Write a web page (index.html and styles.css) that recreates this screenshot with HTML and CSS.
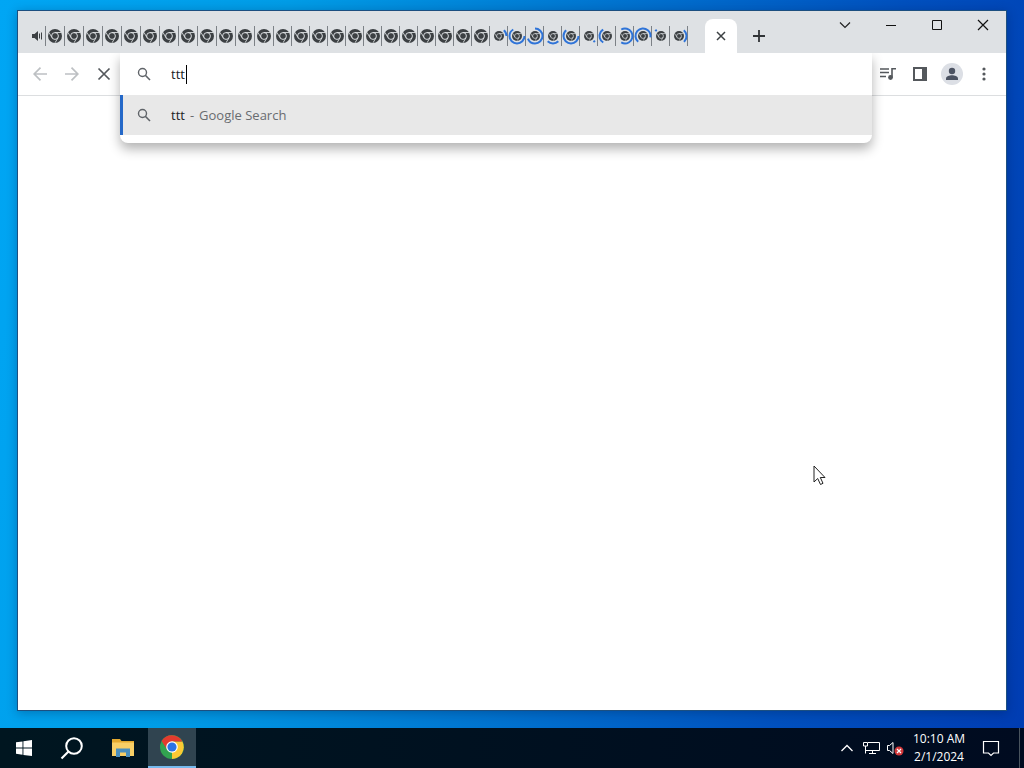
FILE: index.html
```html
<!DOCTYPE html>
<html lang="en">
<head>
<meta charset="utf-8">
<title>Desktop</title>
<link rel="stylesheet" href="styles.css">
</head>
<body>
<svg class="defs" aria-hidden="true">
  <symbol id="chrome" viewBox="0 0 16 16">
    <circle cx="8" cy="8" r="8" fill="#3c4043"/>
    <circle cx="8" cy="8" r="3.9" fill="none" stroke="#dee1e4" stroke-width="1.1"/>
    <path d="M8 4H15M11.500 9.900 8 15.800M4.600 9.900 1.100 3.900" stroke="#dee1e4" stroke-width="1"/>
  </symbol>
  <symbol id="search" viewBox="0 0 16 16">
    <circle cx="6.5" cy="6.5" r="4" fill="none" stroke="currentColor" stroke-width="1.4"/>
    <path d="M9.3 9.3 14 14" stroke="currentColor" stroke-width="1.6"/>
  </symbol>
</svg>
<main class="desktop">
  <section class="window">
    <header class="titlebar">
      <nav class="tabs" id="tabs" aria-label="Tabs">
        <button class="tab tab-audio" aria-label="Playing audio"><svg width="11" height="12" viewBox="0 0 11 12"><path d="M0 4h2.500L6 1v10L2.500 8H0z" fill="#3c4043"/><path d="M7.500 3.500v5M9.500 2.500v7" stroke="#3c4043"/></svg></button>
      </nav>
      <button class="active-tab" aria-label="Close tab"><svg width="10" height="10" viewBox="0 0 10 10"><path d="M1 1 9 9M9 1 1 9" stroke="#3c4043" stroke-width="1.500"/></svg></button>
      <button class="new-tab" aria-label="New tab"><svg width="12" height="12" viewBox="0 0 12 12"><path d="M6 0v12M0 6h12" stroke="#303336" stroke-width="1.800"/></svg></button>
      <div class="controls">
        <button aria-label="Search tabs"><svg width="12" height="12" viewBox="0 0 12 12"><path d="M1 3.500 6 8.500 11 3.500" fill="none" stroke="#222" stroke-width="1.200"/></svg></button>
        <button aria-label="Minimize"><svg width="10" height="12" viewBox="0 0 10 12"><path d="M0 6.500h10" stroke="#111"/></svg></button>
        <button aria-label="Maximize"><svg width="10" height="12" viewBox="0 0 10 12"><path d="M.5 1.500h9v9h-9z" fill="none" stroke="#111"/></svg></button>
        <button aria-label="Close"><svg width="10" height="12" viewBox="0 0 10 12"><path d="M0 1 10 11M10 1 0 11" stroke="#111" stroke-width="1.200"/></svg></button>
      </div>
    </header>
    <div class="toolbar">
      <button aria-label="Back"><svg width="14" height="14" viewBox="0 0 14 14"><path d="M14 7H1M7.500 .7 1.200 7l6.300 6.300" fill="none" stroke="#bdc0c3" stroke-width="1.700"/></svg></button>
      <button aria-label="Forward"><svg width="14" height="14" viewBox="0 0 14 14"><path d="M0 7h13M6.500 .7 12.800 7l-6.300 6.300" fill="none" stroke="#bdc0c3" stroke-width="1.700"/></svg></button>
      <button aria-label="Stop loading"><svg width="12" height="12" viewBox="0 0 12 12"><path d="M.5 .5l11 11M11.500 .5l-11 11" stroke="#54585c" stroke-width="1.700"/></svg></button>
      <div class="omnibox">
        <div class="popup">
          <label class="row">
            <svg class="glass" width="16" height="16"><use href="#search"/></svg>
            <span class="entry"><input class="query" type="text" value="ttt" size="1" aria-label="Address and search bar"><span class="caret"></span></span>
          </label>
          <a class="row suggestion" href="#">
            <svg class="glass" width="16" height="16"><use href="#search"/></svg>
            <span class="match">ttt</span><span class="hint"><span>-</span><span>Google Search</span></span>
          </a>
        </div>
      </div>
      <button aria-label="Media controls"><svg width="16" height="14" viewBox="0 0 16 14"><path d="M0 2h9M0 5.500h9M0 9.500h6M12 10.500V1.800h4" fill="none" stroke="#54585c" stroke-width="1.600"/><circle cx="10.500" cy="10.500" r="2.400" fill="#54585c"/></svg></button>
      <button aria-label="Side panel"><svg width="14" height="14" viewBox="0 0 14 14"><path d="M0 0h14v14H0zM2 2v10h7V2z" fill="#54585c" fill-rule="evenodd"/></svg></button>
      <button aria-label="Profile"><svg width="22" height="22" viewBox="0 0 22 22"><circle cx="11" cy="11" r="11" fill="#dcdfe5"/><circle cx="11" cy="8" r="3.200" fill="#4c5362"/><path d="M5 17v-1.500c0-2 3.500-3.200 6-3.200s6 1.200 6 3.200V17z" fill="#4c5362"/></svg></button>
      <button aria-label="Menu"><svg width="4" height="14" viewBox="0 0 4 14"><g fill="#54585c"><circle cx="2" cy="2" r="1.600"/><circle cx="2" cy="7" r="1.600"/><circle cx="2" cy="12" r="1.600"/></g></svg></button>
    </div>
    <div class="page"></div>
  </section>
  <svg class="pointer" width="13" height="21" viewBox="0 0 13 21"><path d="M1 1v16l3.700-3.500 2.800 6 2.500-1.200-2.700-5.800H12z" fill="#fff" stroke="#222"/></svg>
</main>
<footer class="taskbar">
  <button class="app" aria-label="Start"><svg width="16" height="16" viewBox="0 0 16 16"><path d="M0 2.300 6.500 1.400V7.600H0zM7.400 1.200 16 0V7.600H7.400zM0 8.500H6.500V14.700L0 13.800zM7.400 8.500H16V16L7.400 14.900z" fill="#fff"/></svg></button>
  <button class="app" aria-label="Search"><svg width="24" height="24" viewBox="0 0 24 24"><circle cx="14" cy="10" r="7.800" fill="none" stroke="#fff" stroke-width="2"/><path d="M8.500 15.500 1.500 22.500" stroke="#fff" stroke-width="2.200"/></svg></button>
  <button class="app files" aria-label="File Explorer"><svg width="22" height="20" viewBox="0 0 22 20"><path d="M0 1h8l1.500 2H22v15H0z" fill="#e3a92f"/><path d="M0 4.500h22V18H0z" fill="#f8cf66"/><path d="M4 19v-8.500h14V19h-4v-4.500H8V19z" fill="#4a8fbe"/></svg></button>
  <button class="app running" aria-label="Google Chrome"><svg width="24" height="24" viewBox="0 0 24 24"><circle cx="12" cy="12" r="12" fill="#32a350"/><path d="M12 12 12 24A12 12 0 0 0 22.400 6.500H12z" fill="#fcc934"/><path d="M1.600 6A12 12 0 0 1 22.400 6.500H12L7.200 14.700z" fill="#e33b2e"/><circle cx="12" cy="12" r="5.800" fill="#fff"/><circle cx="12" cy="12" r="4.600" fill="#2b73e4"/></svg></button>
  <div class="tray">
    <button aria-label="Show hidden icons"><svg width="12" height="8" viewBox="0 0 12 8"><path d="M.5 7 6 1.500 11.500 7" fill="none" stroke="#fff" stroke-width="1.300"/></svg></button>
    <button aria-label="Network"><svg width="17" height="14" viewBox="0 0 17 14"><path d="M5 1.500h11.500v8H4M2.500 5v7.500M2.500 9.500H4M6 12.500h7M9.500 9.500v3M.5 1.500h4v3.500h-4z" fill="none" stroke="#fff"/></svg></button>
    <button aria-label="Volume muted"><svg width="17" height="15" viewBox="0 0 17 15"><path d="M.5 4.500h2l3.500-3v11l-3.500-3h-2z" fill="none" stroke="#fff"/><circle cx="12" cy="10" r="4.500" fill="#d3383a"/><path d="M10 8l4 4M14 8l-4 4" stroke="#fff" stroke-width="1.200"/></svg></button>
    <button class="clock"><span>10:10 AM</span><span>2/1/2024</span></button>
    <button class="notify" aria-label="Notifications"><svg width="16" height="17" viewBox="0 0 16 17"><path d="M.5 1.500h15v11.500H10.500L8 15.500 5.500 13H.5z" fill="none" stroke="#fff" stroke-width="1.200"/></svg></button>
  </div>
  <div class="peek"></div>
</footer>
<script src="tabs.js"></script>
</body>
</html>
```
FILE: styles.css
```css
* { box-sizing: border-box; }
body {
  margin: 0;
  min-height: 100vh;
  display: flex;
  flex-direction: column;
  font: 13px/20px "Open Sans", "Noto Sans", sans-serif;
  background: linear-gradient(100deg, #00a6f4 0%, #009ce6 25%, #0078d2 50%, #0050be 78%, #003cb2 100%);
}
button { border: 0; padding: 0; background: none; font: inherit; color: inherit; display: grid; place-items: center; }
svg { display: block; overflow: visible; }
.defs { position: absolute; width: 0; height: 0; }

.desktop { flex: 1; display: flex; padding: 10px 17px 17px; }
.window { flex: 1; display: flex; flex-direction: column; border: 1px solid #1c4f80; background: #fff; box-shadow: 0 2px 10px rgba(0, 20, 60, 0.3); }
.titlebar { display: flex; height: 42px; padding-left: 9px; background: #dee1e4; }
.tabs { display: flex; align-items: center; margin-right: 17px; }
.tab { width: 18px; height: 20px; padding-left: 1px; margin-top: 8px; border-right: 1px solid #7c8186; }
.tab-audio { width: 19px; padding-left: 2px; }
.wide { width: 19px; padding-left: 0; }
.active-tab { width: 32px; margin-top: 8px; border-radius: 8px 8px 0 0; background: #fff; }
.new-tab { width: 44px; margin-top: 8px; }
.controls { display: flex; margin-left: auto; height: 28px; }
.controls button { width: 46px; }

.toolbar { display: flex; align-items: center; height: 43px; padding: 0 6px; border-bottom: 1px solid #dcdee0; }
.toolbar > button { width: 32px; height: 32px; }
.omnibox { flex: 1; align-self: flex-start; position: relative; }
.popup { position: absolute; z-index: 1; top: 0; left: 0; right: 0; padding-bottom: 8px; border-radius: 0 0 8px 8px; background: #fff; box-shadow: 0 6px 12px rgba(0, 0, 0, 0.3); clip-path: inset(0 -20px -24px -20px); }
.row { display: flex; align-items: center; height: 42px; padding-left: 16px; color: #202124; text-decoration: none; }
.glass { margin-right: 19px; color: #5f6368; }
.entry { display: flex; align-items: center; }
.query { width: 15px; padding: 0; border: 0; outline: 0; background: none; font: inherit; color: #202124; }
.caret { width: 1px; height: 19px; background: #000; }
.suggestion { height: 40px; padding-left: 13px; border-left: 3px solid #2468c8; background: #e8e8e8; }
.hint { display: flex; gap: 5px; margin-left: 5px; color: #696c70; }
.page { flex: 1; }
.pointer { position: absolute; z-index: 2; left: 813px; top: 465px; }

.taskbar { display: flex; height: 40px; background: linear-gradient(90deg, #001620, #000b20); color: #fff; }
.app { width: 48px; }
.files { width: 52px; padding-left: 2px; }
.running { background: #304450; border-bottom: 2px solid #76b9ed; }
.tray { display: flex; align-items: center; margin-left: auto; padding-right: 8px; }
.tray button { width: 24px; height: 40px; }
.tray .clock { width: 64px; align-content: center; font-size: 12px; line-height: 18px; }
.tray .notify { width: 40px; }
.peek { width: 5px; border-left: 1px solid #49545e; }
```
FILE: tabs.js
```js
const strip = document.getElementById("tabs");

function addTab(className, size, arc) {
  const spinner = arc
    ? `<circle cx="10" cy="10" r="7.500" fill="none" stroke="#2f74d8" stroke-width="2" pathLength="360" stroke-dasharray="${arc[1]} 360" transform="rotate(${arc[0]} 10 10)"/>`
    : "";
  const offset = (20 - size) / 2;
  strip.insertAdjacentHTML("beforeend",
    `<button class="tab ${className}" aria-label="Tab"><svg width="16" height="16" viewBox="2 2 16 16">${spinner}<use href="#chrome" x="${offset}" y="${offset}" width="${size}" height="${size}"/></svg></button>`);
}

for (let i = 0; i < 12; i++) addTab("wide", 14);
for (let i = 0; i < 12; i++) addTab("", 14);

// Start angle and sweep of each loading arc, in degrees.
const arcs = [
  [-50, 50], [0, 240], [-90, 250], [45, 90], [0, 230], [38, 16],
  [120, 120], [-120, 240], [130, 240], [220, 16], [-50, 100]
];
for (const arc of arcs) addTab("loading", 10, arc);
```
